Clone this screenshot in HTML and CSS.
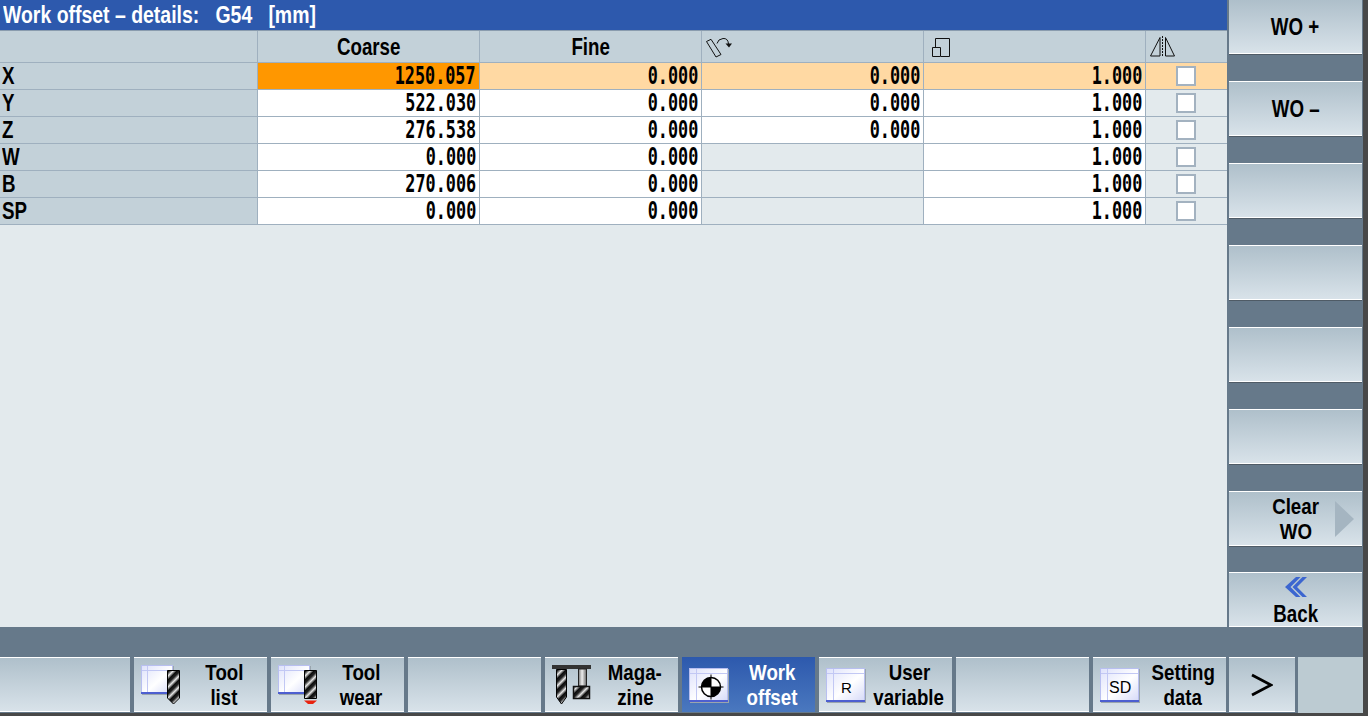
FILE: index.html
```html
<!DOCTYPE html>
<html lang="en">
<head>
<meta charset="utf-8">
<title>Work offset - details</title>
<link rel="stylesheet" href="styles.css">
</head>
<body>
<div class="screen">
  <div class="upper">
    <main class="main">
      <div class="title"><span class="s">Work offset – details:&nbsp;&nbsp; G54&nbsp;&nbsp; [mm]</span></div>
      <div class="grid">
        <div class="hd"></div>
        <div class="hd ctr"><span class="s">Coarse</span></div>
        <div class="hd ctr"><span class="s">Fine</span></div>
        <div class="hd"><svg class="hicon" width="34" height="31" viewBox="0 0 34 31"><path d="M4.500 10.500 9 8.300 19 23.500 14 26Z" fill="none" stroke="#111"/><path d="M15 12.500Q16 8 21 7.500T26.500 13" fill="none" stroke="#111"/><path d="M23.500 12.500H30L27 16.500Z" fill="#111"/></svg></div>
        <div class="hd"><svg class="hicon" width="34" height="31" viewBox="0 0 34 31"><path d="M11.500 16.500V7.500H25.500V25.500H17" fill="none" stroke="#111"/><path d="M8.500 16.500H16.500V25.500H8.500Z" fill="none" stroke="#111"/></svg></div>
        <div class="hd"><svg class="hicon" width="34" height="31" viewBox="0 0 34 31"><path d="M4.500 25 14 6.500V25ZM19.500 6.500 28.500 25H19.500Z" fill="none" stroke="#111"/><path d="M16.500 5V26" stroke="#111" stroke-dasharray="2 1"/></svg></div>

        <div class="lbl"><span class="s">X</span></div><div class="val sel"><span class="n">1250.057</span></div><div class="val act"><span class="n">0.000</span></div><div class="val act"><span class="n">0.000</span></div><div class="val act"><span class="n">1.000</span></div><div class="chk act"><span class="box"></span></div>
        <div class="lbl"><span class="s">Y</span></div><div class="val"><span class="n">522.030</span></div><div class="val"><span class="n">0.000</span></div><div class="val"><span class="n">0.000</span></div><div class="val"><span class="n">1.000</span></div><div class="chk"><span class="box"></span></div>
        <div class="lbl"><span class="s">Z</span></div><div class="val"><span class="n">276.538</span></div><div class="val"><span class="n">0.000</span></div><div class="val"><span class="n">0.000</span></div><div class="val"><span class="n">1.000</span></div><div class="chk"><span class="box"></span></div>
        <div class="lbl"><span class="s">W</span></div><div class="val"><span class="n">0.000</span></div><div class="val"><span class="n">0.000</span></div><div class="val off"></div><div class="val"><span class="n">1.000</span></div><div class="chk"><span class="box"></span></div>
        <div class="lbl"><span class="s">B</span></div><div class="val"><span class="n">270.006</span></div><div class="val"><span class="n">0.000</span></div><div class="val off"></div><div class="val"><span class="n">1.000</span></div><div class="chk"><span class="box"></span></div>
        <div class="lbl"><span class="s">SP</span></div><div class="val"><span class="n">0.000</span></div><div class="val"><span class="n">0.000</span></div><div class="val off"></div><div class="val"><span class="n">1.000</span></div><div class="chk"><span class="box"></span></div>
      </div>
    </main>
    <aside class="vkeys">
      <div class="key first"><span class="s">WO +</span></div>
      <div class="key"><span class="s">WO –</span></div>
      <div class="key"></div>
      <div class="key"></div>
      <div class="key"></div>
      <div class="key"></div>
      <div class="key clear"><span class="s">Clear</span><span class="s">WO</span><span class="tri"></span></div>
      <div class="key back"><svg width="22" height="20" viewBox="0 0 22 20"><path d="M11 0 0 10 11 20H15.500L5.500 10 15.500 0Z" fill="#3c66d0"/><path d="M17.500 0 7.500 10 17.500 20H22L12 10 22 0Z" fill="#3c66d0"/></svg><span class="s">Back</span></div>
    </aside>
  </div>
  <nav class="hkeys">
    <div class="hkey lead"></div>
    <div class="hkey"><svg class="ic" width="47" height="55" viewBox="0 0 47 55"><use href="#win"/><use href="#drill" x="33" y="13"/></svg><span class="t"><span class="s">Tool</span><span class="s">list</span></span></div>
    <div class="hkey"><svg class="ic" width="47" height="55" viewBox="0 0 47 55"><use href="#win"/><use href="#shank" x="33" y="13"/><path d="M33 43.500H46L42 47H37Z" fill="#e8230f"/></svg><span class="t"><span class="s">Tool</span><span class="s">wear</span></span></div>
    <div class="hkey"></div>
    <div class="hkey"><svg class="ic" width="47" height="55" viewBox="0 0 47 55"><rect x="7" y="8" width="39" height="4" fill="#333"/><use href="#drill-m" x="11" y="12"/><rect x="33.500" y="12" width="8" height="17" fill="url(#rod)" stroke="#222"/><rect x="28.500" y="29.500" width="16" height="12" fill="url(#st)" stroke="#111" stroke-width="1.500"/></svg><span class="t"><span class="s">Maga-</span><span class="s">zine</span></span></div>
    <div class="hkey on"><svg class="ic" width="47" height="55" viewBox="0 0 47 55"><use href="#win2"/><circle cx="29" cy="30" r="9.500" fill="#fff"/><path d="M29 30V20.500A9.500 9.500 0 0 0 19.500 30ZM29 30V39.500A9.500 9.500 0 0 0 38.500 30Z" fill="#000"/><circle cx="29" cy="30" r="9.500" fill="none" stroke="#000" stroke-width="1.500"/><path d="M29 17.500V42.500M16.500 30H41.500" stroke="#000"/></svg><span class="t"><span class="s">Work</span><span class="s">offset</span></span></div>
    <div class="hkey"><svg class="ic" width="47" height="55" viewBox="0 0 47 55"><use href="#win2"/><text x="22" y="36" class="ictext r">R</text></svg><span class="t"><span class="s">User</span><span class="s">variable</span></span></div>
    <div class="hkey"></div>
    <div class="hkey"><svg class="ic" width="47" height="55" viewBox="0 0 47 55"><use href="#win2"/><text x="16" y="36" class="ictext">SD</text></svg><span class="t"><span class="s">Setting</span><span class="s">data</span></span></div>
    <div class="hkey more"><svg width="22" height="24" viewBox="0 0 22 24"><path d="M1 2 20 12 1 22" fill="none" stroke="#000" stroke-width="2.800"/></svg></div>
    <div class="hkey blank"></div>
  </nav>
</div>
<svg class="defs" width="0" height="0">
  <defs>
    <linearGradient id="wg" x1="0" y1="0" x2="1" y2="1"><stop offset="0" stop-color="#dde1fb"/><stop offset=".55" stop-color="#fff"/><stop offset="1" stop-color="#d5d9f8"/></linearGradient>
    <linearGradient id="st" gradientUnits="userSpaceOnUse" x1="0" y1="0" x2="5.500" y2="5.500" spreadMethod="repeat"><stop offset="0" stop-color="#0c0c0c"/><stop offset=".3" stop-color="#222"/><stop offset=".65" stop-color="#e8e8e8"/><stop offset="1" stop-color="#0c0c0c"/></linearGradient>
    <linearGradient id="rod" x1="0" y1="0" x2="1" y2="0"><stop offset="0" stop-color="#777"/><stop offset=".45" stop-color="#eee"/><stop offset="1" stop-color="#666"/></linearGradient>
    <g id="win"><rect x="8" y="9" width="32" height="29" fill="#9aa5ad"/><rect x="7.500" y="8.500" width="31" height="28" fill="url(#wg)" stroke="#b8bff0"/><path d="M8 13.500H38M13.500 9V36" stroke="#c2c8f4"/><rect x="7" y="35" width="32" height="2" fill="#4d5fd0"/></g>
    <g id="win2"><rect x="8" y="12" width="39" height="34" fill="#9aa5ad"/><rect x="7.500" y="11.500" width="38" height="33" fill="url(#wg)" stroke="#b8bff0"/><path d="M8 16.500H45M14.500 12V44" stroke="#c2c8f4"/><rect x="7" y="43" width="39" height="2" fill="#4d5fd0"/></g>
    <g id="drill"><path d="M.5.500H12.500V28L6.500 34 .5 28Z" fill="url(#st)" stroke="#000"/></g>
    <g id="drill-m"><path d="M.5.500H10.500V28L5.500 35 .5 28Z" fill="url(#st)" stroke="#000"/></g>
    <g id="shank"><path d="M.5.500H12.500V28.500H.5Z" fill="url(#st)" stroke="#000"/></g>
  </defs>
</svg>
</body>
</html>
```
FILE: styles.css
```css
* { box-sizing: border-box; }
html, body { margin: 0; height: 100%; overflow: hidden; }
body { background: #66798a; }
.defs { position: absolute; }
.screen {
  width: 1368px; height: 716px; display: flex; flex-direction: column;
  font-family: "Liberation Sans", sans-serif;
  font-weight: 700; font-size: 24px; color: #000; background: #66798a;
  border-bottom: 3px solid #484848; border-right: 5px solid #484848;
}
.s { display: inline-block; white-space: nowrap; transform: scaleX(.78); }
.n {
  display: inline-block; white-space: nowrap; transform: scaleX(.7); transform-origin: right center;
  font-family: "DejaVu Sans Mono", monospace; letter-spacing: 0;
}
.upper { display: flex; height: 627px; }
.main { width: 1227px; background: #e3eaed; display: flex; flex-direction: column; }
.title {
  height: 31px; background: #2d59ad; color: #fff; line-height: 30px;
  padding-left: 3px; border-bottom: 1px solid #8a9cae; white-space: nowrap;
}
.title .s { transform: scaleX(.81); transform-origin: left center; }
.grid {
  display: grid; grid-template-columns: 258px 222px 222px 222px 222px 81px;
  grid-template-rows: 32px repeat(6, 27px);
}
.grid > div { border-right: 1px solid #9fb0bf; border-bottom: 1px solid #9fb0bf; line-height: 26px; overflow: hidden; }
.grid > div:nth-child(6n) { border-right: 0; }
.hd { background: #c3d1d9; }
.ctr { text-align: center; line-height: 31px !important; }
.hicon { display: block; }
.lbl { background: #c3d1d9; padding-left: 2px; }
.lbl .s { transform-origin: left center; }
.val { background: #fff; text-align: right; padding-right: 3px; }
.sel { background: #ff9700; }
.act { background: #ffd9a3 !important; }
.off { background: #e3eaed; }
.chk { background: #e3eaed; display: flex; align-items: center; justify-content: center; padding-right: 1px; }
.box { width: 20px; height: 20px; background: #fff; border: 2px solid #a3b2c0; }
.vkeys { width: 134px; margin-left: 2px; display: flex; flex-direction: column; gap: 27px; }
.key {
  width: 133px; height: 55px; flex: none; display: flex; flex-direction: column; align-items: center; justify-content: center;
  background: linear-gradient(#aebfca, #d9e3ea); line-height: 24px; position: relative;
  box-shadow: inset 0 1px #fff, inset 0 -1px #fff, 0 1px #4f5b66;
}
.key.first { height: 54px; box-shadow: inset 0 -1px #fff, 0 1px #4f5b66; }
.key.clear { font-size: 22px; line-height: 25px; }
.clear .s { transform: scaleX(.85); }
.key.back { margin-top: -1px; justify-content: flex-start; padding-top: 5px; box-shadow: inset 0 1px #fff, inset 0 -1px #fff; }
.back svg { display: block; margin-bottom: 5px; }
.tri { position: absolute; right: 8px; top: 10px; border-left: 19px solid #a5b5c1; border-top: 18px solid transparent; border-bottom: 18px solid transparent; }
.hkeys { height: 56px; margin-top: 30px; display: flex; gap: 4px; }
.hkey {
  width: 133px; height: 55px; flex: none; display: flex; align-items: center;
  background: linear-gradient(#aebfca, #d9e3ea); font-size: 22px; line-height: 25px;
  box-shadow: inset 0 1px #fff, inset 0 -1px #fff;
}
.hkey .s { transform: scaleX(.85); }
.lead { width: 130px; }
.more { width: 66px; justify-content: center; margin-left: -1px; margin-right: -1px; }
.blank { flex: 1; height: 56px; background: #bccbd2; box-shadow: none; }
.ic { flex: none; align-self: flex-start; }
.t { width: 87px; display: flex; flex-direction: column; align-items: center; }
.on { background: linear-gradient(#2d59ad, #4a78bf); color: #fff; box-shadow: none; }
.ictext { font: 400 16px "Liberation Sans", sans-serif; fill: #000; }
.ictext.r { font-size: 15px; }
```
